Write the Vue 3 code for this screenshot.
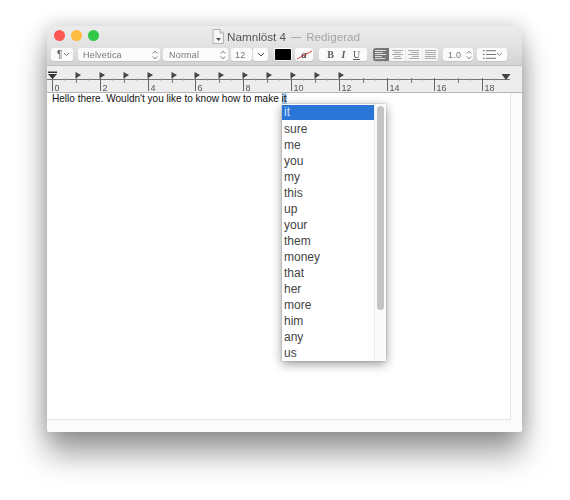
<script setup>
const unit = 23.9
const origin = 52
const units = Array.from({ length: 19 }, (_, i) => i)
const numbered = units.filter((u) => u % 2 === 0).map((u) => ({ n: u, x: Math.round(origin + u * unit) + 0.5 }))
const odd = units.filter((u) => u % 2 === 1).map((u) => Math.round(origin + u * unit) + 0.5)
const dots = units.map((u) => Math.round(origin + (u + 0.5) * unit) + 0.5)
const stops = Array.from({ length: 12 }, (_, i) => Math.round(origin + (i + 1) * unit))
const words = ['it', 'sure', 'me', 'you', 'my', 'this', 'up', 'your', 'them', 'money', 'that', 'her', 'more', 'him', 'any', 'us']
</script>

<template>
  <div class="desk">
    <div class="window">
      <div class="inner">
        <div class="titlebar">
          <div class="lights">
            <span class="light red"></span>
            <span class="light yellow"></span>
            <span class="light green"></span>
          </div>
          <div class="title">
            <svg class="docicon" width="12" height="15" viewBox="0 0 12 15">
              <path d="M1 .5h7l3.500 3.500v10.500h-10.500z" fill="#f6f6f6" stroke="#b0b0b0" />
              <path d="M8 .5v3.500h3.500" fill="#e4e4e4" stroke="#b0b0b0" />
              <path d="M4 9h5l-2.500 3z" fill="#555" />
            </svg>
            <span class="name">Namnlöst 4</span>
            <span class="dash">—</span>
            <span class="state">Redigerad</span>
          </div>
        </div>

        <div class="toolbar">
          <div class="ctl para">
            <span class="ctltext pil">¶</span>
            <svg width="7" height="5" viewBox="0 0 7 5"><path d="M1 1l2.500 2.500L6 1" class="chev" /></svg>
          </div>
          <div class="ctl font">
            <span class="ctltext">Helvetica</span>
            <svg width="6" height="10" viewBox="0 0 6 10"><path d="M.8 3.500L3 1.200l2.200 2.300M.8 6.500L3 8.800l2.200-2.300" class="chev" /></svg>
          </div>
          <div class="ctl weight">
            <span class="ctltext">Normal</span>
            <svg width="6" height="10" viewBox="0 0 6 10"><path d="M.8 3.500L3 1.200l2.200 2.300M.8 6.500L3 8.800l2.200-2.300" class="chev" /></svg>
          </div>
          <div class="ctl size"><span class="ctltext">12</span></div>
          <div class="ctl sizedrop">
            <svg width="8" height="5" viewBox="0 0 8 5"><path d="M1 1l3 3 3-3" class="chev dark" /></svg>
          </div>
          <div class="ctl well"><span class="swatch"></span></div>
          <div class="ctl abtn">
            <span class="astrike">a</span>
            <svg class="strike" width="17" height="10" viewBox="0 0 17 10"><path d="M1 9L16 1" stroke="#d0403a" fill="none" /></svg>
          </div>
          <div class="ctl biu">
            <span class="b">B</span>
            <span class="i">I</span>
            <span class="u">U</span>
          </div>
          <div class="ctl aligns">
            <span class="seg on">
              <svg width="13" height="9" viewBox="0 0 13 9"><path d="M1 .5h11M1 2.500h8M1 4.500h11M1 6.500h7M1 8.500h10" stroke="#ddd" /></svg>
            </span>
            <span class="seg">
              <svg width="13" height="9" viewBox="0 0 13 9"><path d="M1 .5h11M3 2.500h7M1 4.500h11M3.500 6.500h6M2 8.500h9" class="ln" /></svg>
            </span>
            <span class="seg">
              <svg width="13" height="9" viewBox="0 0 13 9"><path d="M1 .5h11M4 2.500h8M1 4.500h11M5 6.500h7M2 8.500h10" class="ln" /></svg>
            </span>
            <span class="seg">
              <svg width="13" height="9" viewBox="0 0 13 9"><path d="M1 .5h11M1 2.500h11M1 4.500h11M1 6.500h11M1 8.500h11" class="ln" /></svg>
            </span>
          </div>
          <div class="ctl spacing">
            <span class="ctltext">1.0</span>
            <svg width="6" height="10" viewBox="0 0 6 10"><path d="M.8 3.500L3 1.200l2.200 2.300M.8 6.500L3 8.800l2.200-2.300" class="chev" /></svg>
          </div>
          <div class="ctl list">
            <svg width="14" height="9" viewBox="0 0 14 9"><path d="M3 .5h11M3 4.500h11M3 8.500h11" stroke="#707070" /><path d="M0 .5h1.500M0 4.500h1.500M0 8.500h1.500" stroke="#444" /></svg>
            <svg width="7" height="5" viewBox="0 0 7 5"><path d="M1 1l2.500 2.500L6 1" class="chev" /></svg>
          </div>
        </div>

        <svg class="ruler" width="475" height="26" viewBox="47 66 475 26">
          <path d="M47 79.500H510" stroke="#777" />
          <path v-for="x in dots" :key="'d' + x" :d="`M${x} 78.500v2`" stroke="#999" />
          <path v-for="x in odd" :key="'o' + x" :d="`M${x} 78v5`" stroke="#777" />
          <g v-for="t in numbered" :key="t.n">
            <path :d="`M${t.x} 78V91`" stroke="#666" />
            <text :x="t.x + 2" y="90.500" class="rulernum">{{ t.n }}</text>
          </g>
          <path v-for="x in stops" :key="'s' + x" :d="`M${x - 0.5} 72l5.500 3-5.500 3.500z`" fill="#444" />
          <path d="M48 71.500h9v1.500h-9z" fill="#333" />
          <path d="M48 74h9l-4.500 5z" fill="#333" />
          <path d="M501.500 74h9l-4.500 6z" fill="#444" />
        </svg>

        <div class="body">
          <div class="page">
            <p class="line">Hello there. Wouldn't you like to know how to make <span class="sel">it</span></p>
            <div class="popup">
              <ul class="items">
                <li v-for="(w, i) in words" :key="w" class="item" :class="{ active: i === 0 }">{{ w }}</li>
              </ul>
              <div class="track"><div class="thumb"></div></div>
            </div>
          </div>
          <div class="rightgap"></div>
        </div>
        <div class="bottomgap"></div>
      </div>
    </div>
  </div>
</template>

<style>
html, body { background: #fff; margin: 0; }
</style>

<style scoped>
.desk {
  width: 570px;
  height: 500px;
  box-sizing: border-box;
  padding: 26px 0 0 47px;
  overflow: hidden;
}
.window {
  width: 475px;
  height: 406px;
  border-radius: 5px 5px 2px 2px;
  background: #fbfbfb;
  box-shadow: 0 22px 30px rgba(0, 0, 0, 0.38), 0 0 20px rgba(0, 0, 0, 0.2);
}
.inner {
  height: 100%;
  display: flex;
  flex-direction: column;
  border-radius: 5px 5px 2px 2px;
  overflow: hidden;
  font-family: "Liberation Sans", Arial, sans-serif;
  filter: blur(0.3px);
}
.titlebar {
  height: 20px;
  flex: none;
  display: flex;
  align-items: center;
  background: linear-gradient(#ececec, #e2e2e2);
}
.lights { display: flex; gap: 6px; padding-left: 7px; margin-bottom: 1px; }
.light { width: 11px; height: 11px; border-radius: 50%; display: block; }
.red { background: #fc5753; }
.yellow { background: #fdbc40; }
.green { background: #34c84a; }
.title {
  margin-left: 113px;
  display: flex;
  align-items: center;
  font-size: 11.700px;
  white-space: nowrap;
}
.docicon { margin-right: 3px; }
.name { color: #555; }
.dash { color: #9a9a9a; margin: 0 5px; font-size: 10px; }
.state { color: #a6a6a6; }
.toolbar {
  height: 20px;
  flex: none;
  box-sizing: border-box;
  padding: 2px 0 0 4px;
  display: flex;
  align-items: flex-start;
  background: linear-gradient(#e2e2e2, #d3d3d3);
  border-bottom: 1px solid #bfbfbf;
}
.ctl {
  height: 13px;
  background: #fbfbfb;
  border-radius: 3px;
  display: flex;
  align-items: center;
  justify-content: space-between;
  box-sizing: border-box;
  padding: 0 5px;
  flex: none;
  box-shadow: 0 1px 0 rgba(0, 0, 0, 0.08);
}
.ctltext { font-size: 9px; color: #777; letter-spacing: 0.2px; }
.pil { color: #555; font-size: 10px; }
.chev { fill: none; stroke: #777; stroke-width: 1; }
.chev.dark { stroke: #555; }
.ln { stroke: #aaa; }
.para { width: 22px; padding: 0 3px 0 6px; }
.font { width: 82px; margin-left: 5px; padding-right: 2px; }
.weight { width: 65px; margin-left: 3px; padding: 0 2px 0 6px; }
.size { width: 21px; margin-left: 3px; padding: 0 3px 0 4px; }
.sizedrop { width: 15px; margin-left: 1px; justify-content: center; padding: 0; }
.well { width: 18px; margin-left: 6px; padding: 1px; }
.swatch { display: block; width: 100%; height: 100%; background: #000; border-radius: 1px; }
.abtn { width: 18px; margin-left: 3px; position: relative; justify-content: center; padding: 0; }
.astrike { font-family: "Liberation Serif", serif; font-style: italic; font-weight: 700; font-size: 11px; color: #444; line-height: 1; }
.strike { position: absolute; left: 1px; top: 2px; }
.biu {
  width: 48px;
  margin-left: 6px;
  padding: 0 4px 0 5px;
  font-family: "Liberation Serif", serif;
  font-size: 10px;
  font-weight: 700;
  color: #5a5a5a;
}
.b, .i, .u { width: 13px; text-align: center; }
.i { font-style: italic; }
.u { text-decoration: underline; font-weight: 400; }
.aligns { width: 65px; margin-left: 6px; padding: 0; gap: 1px; background: #ececec; overflow: hidden; }
.seg { flex: 1; height: 100%; display: flex; align-items: center; justify-content: center; background: #f6f6f6; }
.seg.on { background: #777; }
.spacing { width: 30px; margin-left: 5px; padding: 0 1px 0 5px; }
.list { width: 30px; margin-left: 4px; padding: 0 4px 0 6px; }
.ruler {
  display: block;
  flex: none;
  background: #ededed;
  border-bottom: 1px solid #b5b5b5;
  box-sizing: content-box;
}
.rulernum { font-size: 9px; fill: #555; font-family: "Liberation Sans", Arial, sans-serif; }
.body { flex: 1; display: flex; min-height: 0; }
.page {
  flex: 1;
  background: #fff;
  position: relative;
  border-right: 1px solid #e4e4e4;
  border-bottom: 1px solid #e4e4e4;
}
.line {
  margin: 0;
  padding-left: 5px;
  font-size: 10.050px;
  line-height: 12px;
  color: #111;
  white-space: nowrap;
}
.sel { background: #b5d5f7; }
.rightgap { width: 11px; flex: none; }
.bottomgap { height: 12px; flex: none; }
.popup {
  position: absolute;
  left: 235px;
  top: 11px;
  width: 104px;
  height: 257px;
  display: flex;
  background: #fff;
  box-shadow: 0 3px 10px rgba(0, 0, 0, 0.4), 0 0 2px rgba(0, 0, 0, 0.25);
  overflow: hidden;
}
.items { list-style: none; margin: 0; padding: 1px 0 0; flex: 1; min-width: 0; }
.item {
  height: 16px;
  line-height: 16px;
  padding-left: 2px;
  font-size: 12px;
  color: #444;
}
.item.active { background: #2a76d6; color: #cfe2f8; height: 15px; line-height: 15px; margin-bottom: 1px; }
.track {
  width: 12px;
  flex: none;
  background: #fafafa;
  border-left: 1px solid #eee;
  box-sizing: border-box;
  padding: 2px 2px 0 2px;
}
.thumb { width: 7px; height: 204px; background: #c4c4c4; border-radius: 4px; }
</style>
